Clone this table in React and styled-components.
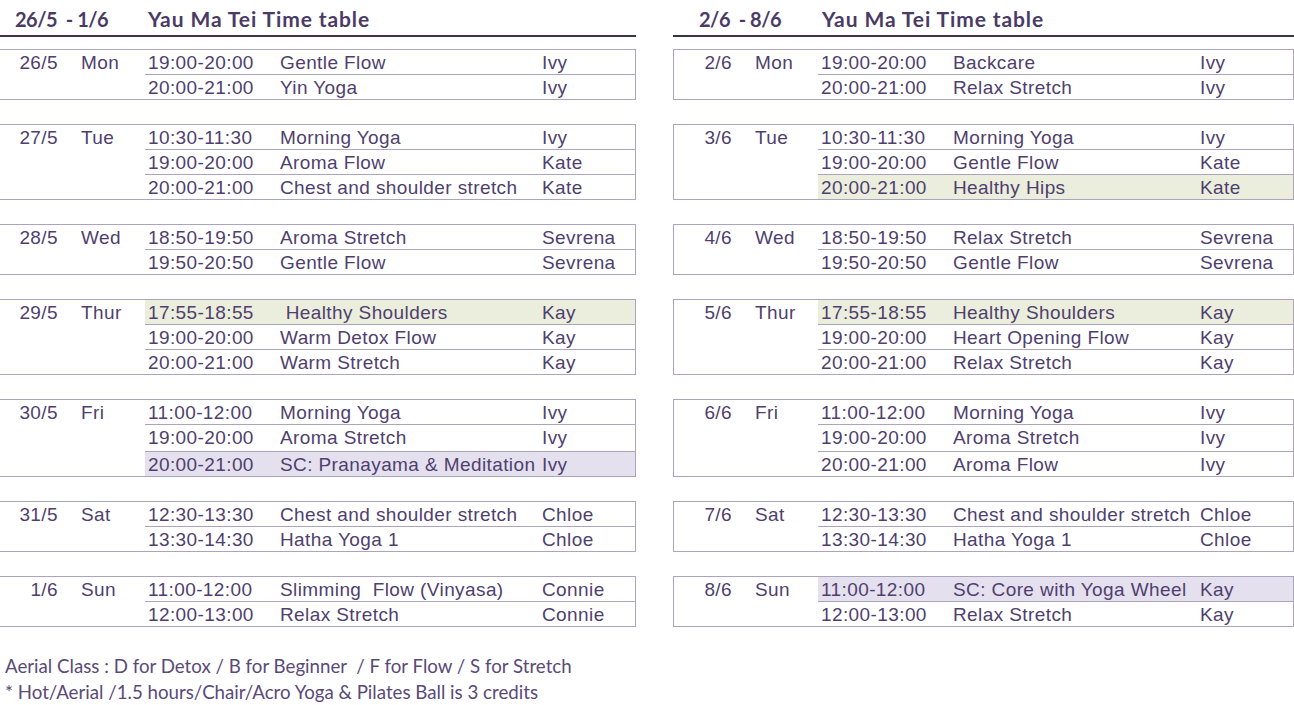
import React from "react";
import styled, { createGlobalStyle } from "styled-components";

const c = (time, name, teacher, extra = {}) => ({ time, name, teacher, ...extra });

const weeks = [
  {
    range: "26/5  - 1/6",
    rangeIndent: 15,
    titleAt: 148,
    width: 636,
    classCol: 262,
    edge: false,
    days: [
      { date: "26/5", day: "Mon", classes: [c("19:00-20:00", "Gentle Flow", "Ivy"), c("20:00-21:00", "Yin Yoga", "Ivy")] },
      {
        date: "27/5",
        day: "Tue",
        classes: [
          c("10:30-11:30", "Morning Yoga", "Ivy"),
          c("19:00-20:00", "Aroma Flow", "Kate"),
          c("20:00-21:00", "Chest and shoulder stretch", "Kate"),
        ],
      },
      {
        date: "28/5",
        day: "Wed",
        classes: [c("18:50-19:50", "Aroma Stretch", "Sevrena"), c("19:50-20:50", "Gentle Flow", "Sevrena")],
      },
      {
        date: "29/5",
        day: "Thur",
        classes: [
          c("17:55-18:55", " Healthy Shoulders", "Kay", { tone: "green" }),
          c("19:00-20:00", "Warm Detox Flow", "Kay"),
          c("20:00-21:00", "Warm Stretch", "Kay"),
        ],
      },
      {
        date: "30/5",
        day: "Fri",
        classes: [
          c("11:00-12:00", "Morning Yoga", "Ivy"),
          c("19:00-20:00", "Aroma Stretch", "Ivy", { tall: true }),
          c("20:00-21:00", "SC: Pranayama & Meditation", "Ivy", { tone: "purple" }),
        ],
      },
      {
        date: "31/5",
        day: "Sat",
        classes: [c("12:30-13:30", "Chest and shoulder stretch", "Chloe"), c("13:30-14:30", "Hatha Yoga 1", "Chloe")],
      },
      {
        date: "1/6",
        day: "Sun",
        classes: [c("11:00-12:00", "Slimming  Flow (Vinyasa)", "Connie"), c("12:00-13:00", "Relax Stretch", "Connie")],
      },
    ],
  },
  {
    range: "2/6  - 8/6",
    rangeIndent: 26,
    titleAt: 149,
    width: 621,
    classCol: 247,
    edge: true,
    days: [
      { date: "2/6", day: "Mon", classes: [c("19:00-20:00", "Backcare", "Ivy"), c("20:00-21:00", "Relax Stretch", "Ivy")] },
      {
        date: "3/6",
        day: "Tue",
        classes: [
          c("10:30-11:30", "Morning Yoga", "Ivy"),
          c("19:00-20:00", "Gentle Flow", "Kate"),
          c("20:00-21:00", "Healthy Hips", "Kate", { tone: "green" }),
        ],
      },
      {
        date: "4/6",
        day: "Wed",
        classes: [c("18:50-19:50", "Relax Stretch", "Sevrena"), c("19:50-20:50", "Gentle Flow", "Sevrena")],
      },
      {
        date: "5/6",
        day: "Thur",
        classes: [
          c("17:55-18:55", "Healthy Shoulders", "Kay", { tone: "green" }),
          c("19:00-20:00", "Heart Opening Flow", "Kay"),
          c("20:00-21:00", "Relax Stretch", "Kay"),
        ],
      },
      {
        date: "6/6",
        day: "Fri",
        classes: [
          c("11:00-12:00", "Morning Yoga", "Ivy"),
          c("19:00-20:00", "Aroma Stretch", "Ivy", { tall: true }),
          c("20:00-21:00", "Aroma Flow", "Ivy"),
        ],
      },
      {
        date: "7/6",
        day: "Sat",
        classes: [c("12:30-13:30", "Chest and shoulder stretch", "Chloe"), c("13:30-14:30", "Hatha Yoga 1", "Chloe")],
      },
      {
        date: "8/6",
        day: "Sun",
        classes: [
          c("11:00-12:00", "SC: Core with Yoga Wheel", "Kay", { tone: "purple" }),
          c("12:00-13:00", "Relax Stretch", "Kay"),
        ],
      },
    ],
  },
];

const tones = {
  green: "#ebeedd",
  purple: "#e4e0ee",
};

const App = () => {
  return (
    <>
      <GlobalStyle />
      <Page>
        <Weeks>
          {weeks.map((week) => (
            <Week key={week.range} $width={week.width}>
              <Header>
                <Range $indent={week.rangeIndent} $titleAt={week.titleAt}>
                  {week.range}
                </Range>
                <span>Yau Ma Tei Time table</span>
              </Header>
              <Days>
                {week.days.map((d) => (
                  <Day key={d.date} $edge={week.edge}>
                    <DayLabel $edge={week.edge}>
                      <DateText>{d.date}</DateText>
                      <DayName>{d.day}</DayName>
                    </DayLabel>
                    <Classes>
                      {d.classes.map((item, i) => (
                        <ClassRow
                          key={item.time + i}
                          $first={i === 0}
                          $tall={item.tall}
                          $tone={item.tone}
                          $classCol={week.classCol}
                        >
                          <Cell>{item.time}</Cell>
                          <Cell>{item.name}</Cell>
                          <Cell>{item.teacher}</Cell>
                        </ClassRow>
                      ))}
                    </Classes>
                  </Day>
                ))}
              </Days>
            </Week>
          ))}
        </Weeks>
        <Notes>
          <p>Aerial Class : D for Detox / B for Beginner&nbsp; / F for Flow / S for Stretch</p>
          <p>* Hot/Aerial /1.5 hours/Chair/Acro Yoga &amp; Pilates Ball is 3 credits</p>
        </Notes>
      </Page>
    </>
  );
};

const GlobalStyle = createGlobalStyle`
  * {
    margin: 0;
    padding: 0;
    box-sizing: border-box;
  }
  body {
    background: #ffffff;
    font-family: "Liberation Sans", Arial, sans-serif;
  }
`;

const Page = styled.main`
  width: 1294px;
  height: 705px;
  overflow: hidden;
`;

const Weeks = styled.div`
  display: flex;
  gap: 37px;
`;

const Week = styled.section`
  width: ${(p) => p.$width}px;
  flex-shrink: 0;
`;

const Header = styled.header`
  height: 37px;
  padding-top: 7px;
  display: flex;
  border-bottom: 2px solid #3b3343;
  font-family: Lato, "Open Sans", sans-serif;
  font-weight: 700;
  font-size: 21px;
  line-height: 24px;
  letter-spacing: 0.9px;
  color: #4a3b66;
  white-space: pre;
`;

const Range = styled.span`
  padding-left: ${(p) => p.$indent}px;
  width: ${(p) => p.$titleAt}px;
  font-size: 20px;
  letter-spacing: -0.5px;
`;

const Days = styled.div`
  display: flex;
  flex-direction: column;
  gap: 24px;
  padding-top: 12px;
`;

const Day = styled.div`
  display: flex;
  border-top: 1px solid #aca3bd;
  border-bottom: 1px solid #aca3bd;
  border-right: 1px solid #aca3bd;
  border-left: ${(p) => (p.$edge ? "1px solid #aca3bd" : "none")};
`;

const DayLabel = styled.div`
  width: ${(p) => (p.$edge ? 144 : 145)}px;
  flex-shrink: 0;
  display: flex;
  align-items: flex-start;
  padding-top: 1px;
  font-size: 19px;
  line-height: 24px;
  letter-spacing: 0.4px;
  color: #4f3f6e;
`;

const DateText = styled.span`
  width: 58px;
  text-align: right;
`;

const DayName = styled.span`
  margin-left: 23px;
`;

const Classes = styled.div`
  flex: 1;
  display: flex;
  flex-direction: column;
`;

const ClassRow = styled.div`
  display: grid;
  grid-template-columns: 132px ${(p) => p.$classCol}px 1fr;
  height: ${(p) => (p.$first ? 24 : p.$tall ? 27 : 25)}px;
  border-top: ${(p) => (p.$first ? "none" : "1px solid #aca3bd")};
  background: ${(p) => (p.$tone ? tones[p.$tone] : "transparent")};
  padding-top: 1px;
  font-size: 19px;
  line-height: 24px;
  letter-spacing: 0.4px;
  color: #4f3f6e;
`;

const Cell = styled.span`
  padding-left: 3px;
  white-space: pre;
`;

const Notes = styled.footer`
  margin-top: 26px;
  padding-left: 5px;
  font-family: Lato, "Open Sans", sans-serif;
  font-size: 18.7px;
  line-height: 26px;
  color: #5a4a78;
`;

export default App;
